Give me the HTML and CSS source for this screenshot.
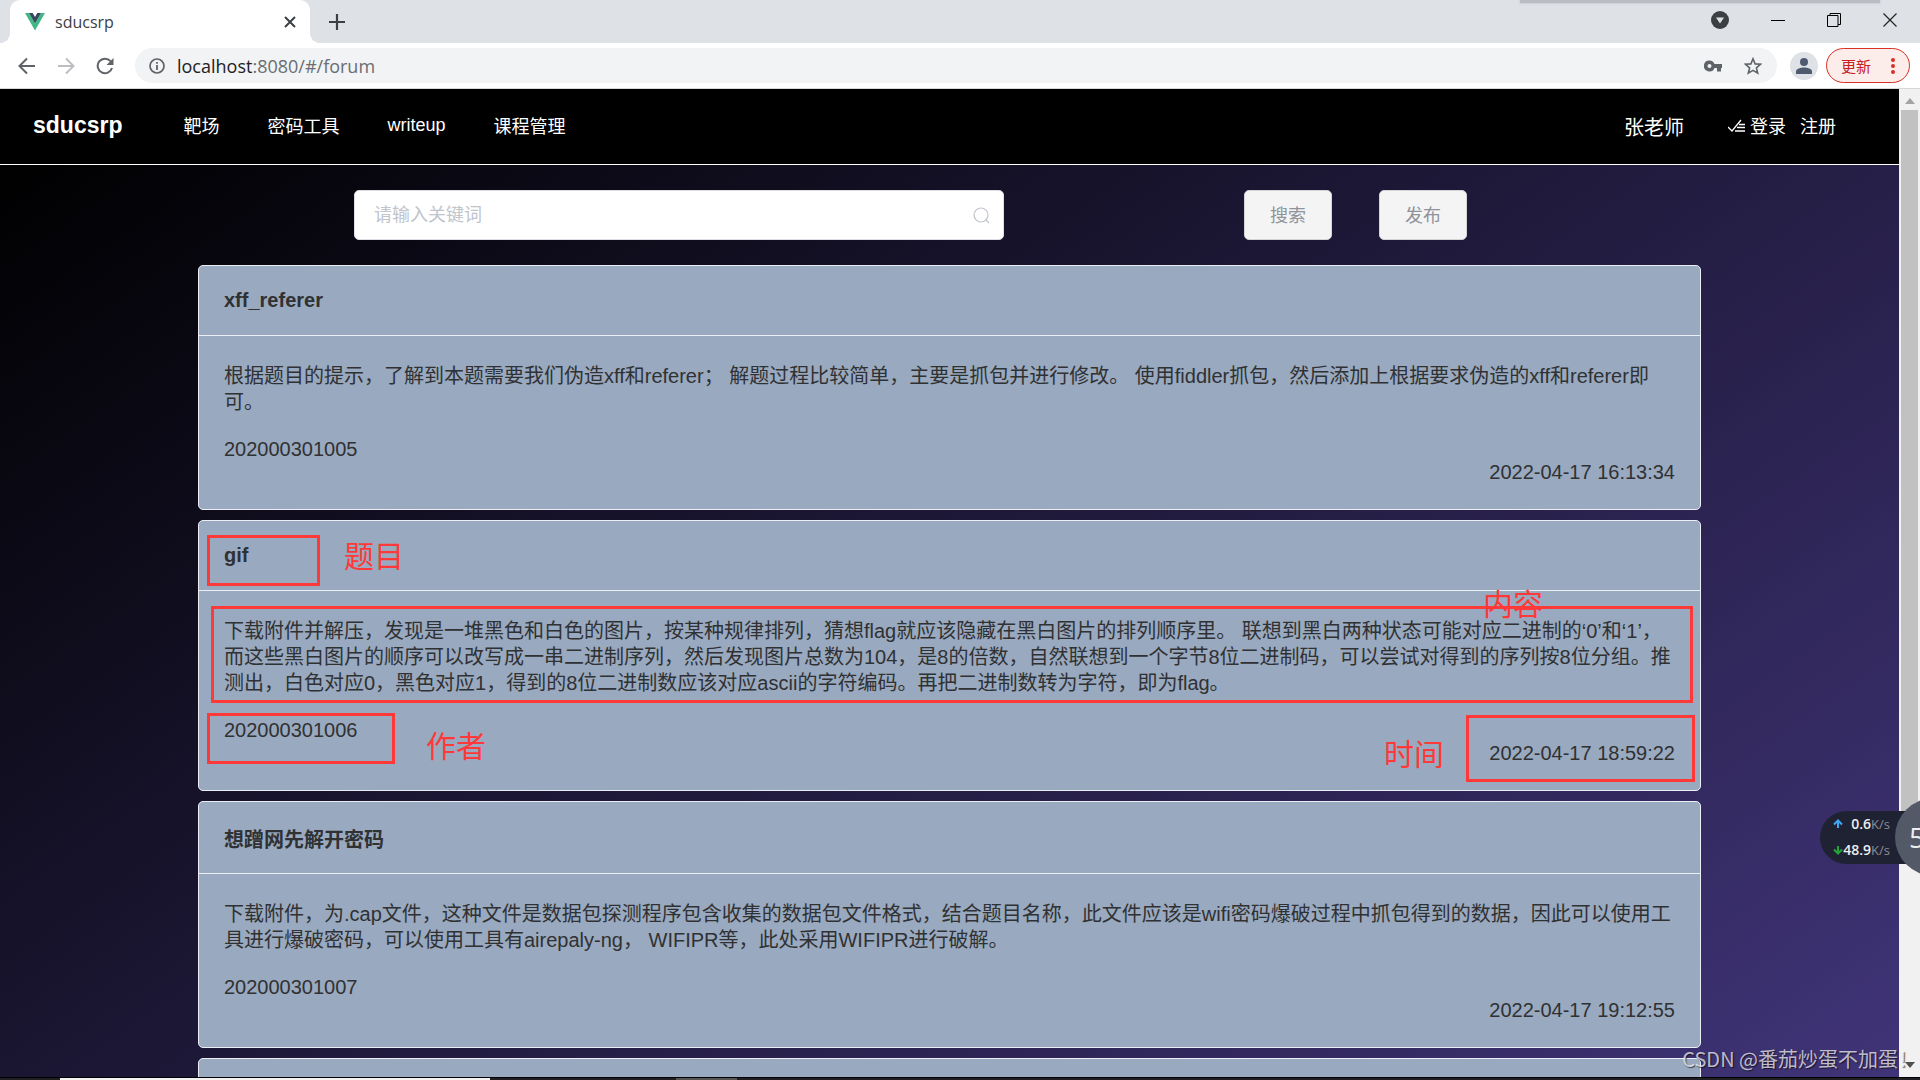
FILE: index.html
```html
<!DOCTYPE html>
<html lang="zh-CN">
<head>
<meta charset="utf-8">
<title>sducsrp</title>
<link rel="stylesheet" href="styles.css">
</head>
<body>
<div class="window">
  <header class="tabstrip">
    <div class="tab">
      <svg class="tab-logo" width="20" height="18" viewBox="0 0 20 18" aria-hidden="true"><path d="M0 0h4l6 10.500L16 0h4L10 17.500z" fill="#41b883"/><path d="M4 0h3.700L10 4l2.300-4H16l-6 10.500z" fill="#35495e"/></svg>
      <span class="tab-title">sducsrp</span>
      <button class="icon-btn" aria-label="关闭标签页"><svg width="12" height="12" viewBox="0 0 12 12"><path d="M1 1l10 10M11 1L1 11" stroke="#3c4043" stroke-width="2"/></svg></button>
    </div>
    <button class="icon-btn new-tab" aria-label="新标签页"><svg width="16" height="16" viewBox="0 0 16 16"><path d="M8 0v16M0 8h16" stroke="#3c4043" stroke-width="2.200"/></svg></button>
    <div class="window-controls">
      <button class="icon-btn" aria-label="搜索标签页"><svg width="18" height="18" viewBox="0 0 18 18"><circle cx="9" cy="9" r="9" fill="#3c4043"/><path d="M5 6.500h8L9 12.500z" fill="#dee1e6"/></svg></button>
      <button class="icon-btn" aria-label="最小化"><svg width="14" height="14" viewBox="0 0 14 14"><path d="M0 7.500h14" stroke="#000"/></svg></button>
      <button class="icon-btn" aria-label="还原"><svg width="14" height="14" viewBox="0 0 14 14"><path d="M.5 2.500h10.500v11H.5zM3 2.500V.5h10.500v11H11" fill="none" stroke="#000"/></svg></button>
      <button class="icon-btn" aria-label="关闭"><svg width="14" height="14" viewBox="0 0 14 14"><path d="M.5.5l13 13M13.500.5l-13 13" stroke="#222" stroke-width="1.200"/></svg></button>
    </div>
  </header>

  <div class="toolbar">
    <button class="icon-btn" aria-label="后退"><svg width="18" height="18" viewBox="0 0 18 18"><path d="M17 9H2M9 1.500L1.500 9 9 16.500" fill="none" stroke="#5f6368" stroke-width="2"/></svg></button>
    <button class="icon-btn" aria-label="前进"><svg width="18" height="18" viewBox="0 0 18 18"><path d="M1 9h15M9 1.500L16.500 9 9 16.500" fill="none" stroke="#bcbec1" stroke-width="2"/></svg></button>
    <button class="icon-btn" aria-label="刷新"><svg width="18" height="18" viewBox="0 0 18 18"><path d="M14.500 4.200A7.300 7.300 0 1 0 16 11" fill="none" stroke="#5f6368" stroke-width="2"/><path d="M17.500 1v7h-7z" fill="#5f6368"/></svg></button>
    <div class="address">
      <svg width="16" height="16" viewBox="0 0 16 16" aria-hidden="true"><circle cx="8" cy="8" r="7" fill="none" stroke="#5f6368" stroke-width="1.700"/><path d="M8 7v5M8 4v1.800" stroke="#5f6368" stroke-width="1.800"/></svg>
      <span class="url">localhost<span class="url-path">:8080/#/forum</span></span>
      <button class="icon-btn" aria-label="密码"><svg width="18" height="12" viewBox="0 0 18 12"><path fill-rule="evenodd" d="M5.500.5a5.500 5.500 0 1 0 5 7.500H13v3.500h4V8h1V4h-7.500a5.500 5.500 0 0 0-5-3.500zm0 3.500a2 2 0 1 1 0 4 2 2 0 0 1 0-4z" fill="#5f6368"/></svg></button>
      <button class="icon-btn" aria-label="收藏"><svg width="18" height="18" viewBox="0 0 18 18"><path d="M9 1.800l2.100 5.100 5.400.4-4.100 3.600 1.300 5.300L9 13.400l-4.700 2.800 1.300-5.300-4.100-3.600 5.400-.4z" fill="none" stroke="#5f6368" stroke-width="1.600"/></svg></button>
    </div>
    <button class="icon-btn profile" aria-label="用户"><svg width="28" height="28" viewBox="0 0 28 28"><circle cx="14" cy="14" r="14" fill="#dee1e6"/><circle cx="14" cy="10" r="4" fill="#4d5a70"/><path d="M6 22v-2.500c0-3 5-4 8-4s8 1 8 4V22z" fill="#4d5a70"/></svg></button>
    <button class="update">更新<svg width="4" height="16" viewBox="0 0 4 16" aria-hidden="true"><g fill="#d93025"><circle cx="2" cy="2" r="2"/><circle cx="2" cy="8" r="2"/><circle cx="2" cy="14" r="2"/></g></svg></button>
  </div>

  <div class="viewport">
    <div class="page">
      <nav class="nav">
        <a class="brand" href="#">sducsrp</a>
        <a href="#">靶场</a>
        <a href="#">密码工具</a>
        <a href="#">writeup</a>
        <a href="#">课程管理</a>
        <span class="user">张老师</span>
        <a class="login" href="#"><svg width="18" height="13" viewBox="0 0 18 13" aria-hidden="true"><path d="M0 8l4 4L13 1M11 5.500h6M9 8.500h8M7 12h10" fill="none" stroke="#fff" stroke-width="1.300"/></svg>登录</a>
        <a class="register" href="#">注册</a>
      </nav>
      <main class="content">
        <form class="search">
          <label class="search-box">
            <input type="text" placeholder="请输入关键词" aria-label="关键词">
            <svg width="17" height="17" viewBox="0 0 17 17" aria-hidden="true"><circle cx="8" cy="8" r="7" fill="none" stroke="#c0c4cc" stroke-width="1.200"/><path d="M12.500 12.500L16 16" stroke="#c0c4cc" stroke-width="1.200"/></svg>
          </label>
          <button class="btn" type="button">搜索</button>
          <button class="btn" type="button">发布</button>
        </form>

        <article class="card">
          <h2>xff_referer</h2>
          <div class="card-body">
            <p>根据题目的提示，了解到本题需要我们伪造xff和referer； 解题过程比较简单，主要是抓包并进行修改。 使用fiddler抓包，然后添加上根据要求伪造的xff和referer即可。</p>
            <div class="author">202000301005</div>
            <time>2022-04-17 16:13:34</time>
          </div>
        </article>

        <article class="card">
          <h2>gif</h2>
          <div class="card-body">
            <p>下载附件并解压，发现是一堆黑色和白色的图片，按某种规律排列，猜想flag就应该隐藏在黑白图片的排列顺序里。 联想到黑白两种状态可能对应二进制的‘0’和‘1’，而这些黑白图片的顺序可以改写成一串二进制序列，然后发现图片总数为104，是8的倍数，自然联想到一个字节8位二进制码，可以尝试对得到的序列按8位分组。推测出，白色对应0，黑色对应1，得到的8位二进制数应该对应ascii的字符编码。再把二进制数转为字符，即为flag。</p>
            <div class="author">202000301006</div>
            <time>2022-04-17 18:59:22</time>
          </div>
          <span class="mark mark-title"></span><span class="note note-title">题目</span>
          <span class="mark mark-text"></span><span class="note note-text">内容</span>
          <span class="mark mark-author"></span><span class="note note-author">作者</span>
          <span class="mark mark-time"></span><span class="note note-time">时间</span>
        </article>

        <article class="card">
          <h2 class="title-cjk">想蹭网先解开密码</h2>
          <div class="card-body">
            <p>下载附件，为.cap文件，这种文件是数据包探测程序包含收集的数据包文件格式，结合题目名称，此文件应该是wifi密码爆破过程中抓包得到的数据，因此可以使用工具进行爆破密码，可以使用工具有airepaly-ng， WIFIPR等，此处采用WIFIPR进行破解。</p>
            <div class="author">202000301007</div>
            <time>2022-04-17 19:12:55</time>
          </div>
        </article>

        <article class="card card-next"></article>
      </main>
    </div>
    <div class="scrollbar">
      <svg width="10" height="6" viewBox="0 0 10 6" aria-hidden="true"><path d="M0 6l5-6 5 6z" fill="#a3a3a3"/></svg>
      <div class="thumb"></div>
      <svg width="10" height="6" viewBox="0 0 10 6" aria-hidden="true"><path d="M0 0l5 6 5-6z" fill="#505050"/></svg>
    </div>
  </div>
  <footer class="taskbar"><span class="task-search"></span><span class="task-active"></span></footer>

  <div class="dock-edge"></div>
  <div class="netspeed">
    <div class="rates">
      <div class="rate"><svg width="10" height="10" viewBox="0 0 10 10" aria-hidden="true"><path d="M5 9V2M1 5.500l4-4 4 4" fill="none" stroke="#3fa9f5" stroke-width="2"/></svg><b>0.6</b><span>K/s</span></div>
      <div class="rate"><svg width="10" height="10" viewBox="0 0 10 10" aria-hidden="true"><path d="M5 1v7M1 4.500l4 4 4-4" fill="none" stroke="#22a637" stroke-width="2"/></svg><b>48.9</b><span>K/s</span></div>
    </div>
    <div class="ball">5</div>
  </div>
  <div class="watermark">CSDN @番茄炒蛋不加蛋！</div>
</div>
</body>
</html>
```
FILE: styles.css
```css
* { box-sizing: border-box; }
body {
  margin: 0;
  font-family: "Liberation Sans", "Noto Sans CJK SC", sans-serif;
  color: #303133;
}
a { color: inherit; text-decoration: none; }
button, input { font: inherit; }
svg { display: block; flex: none; }

.window {
  position: relative;
  display: flex;
  flex-direction: column;
  height: 100vh;
  overflow: hidden;
}

.icon-btn { padding: 0; border: 0; background: none; }

/* Browser chrome */
.tabstrip {
  display: flex;
  align-items: center;
  flex: none;
  height: 43px;
  padding: 0 23px 0 10px;
  background: #dee1e6;
  font-family: "Open Sans", "Noto Sans CJK SC", sans-serif;
}
.tab {
  position: relative;
  display: flex;
  align-items: center;
  gap: 10px;
  width: 300px;
  height: 43px;
  padding: 0 14px 0 15px;
  border-radius: 10px 10px 0 0;
  background: #fff;
  font-size: 16px;
  color: #3c4043;
}
.tab::before, .tab::after {
  content: "";
  position: absolute;
  bottom: 0;
  width: 10px;
  height: 10px;
}
.tab::before { left: -10px; background: radial-gradient(circle at 0 0, #dee1e6 10px, #fff 10px); }
.tab::after { right: -10px; background: radial-gradient(circle at 100% 0, #dee1e6 10px, #fff 10px); }
.tab-title { flex: 1; }
.new-tab { margin-left: 19px; }
.window-controls {
  display: flex;
  align-items: center;
  gap: 42px;
  margin-left: auto;
  padding-bottom: 4px;
}
.toolbar {
  display: flex;
  align-items: center;
  gap: 21px;
  flex: none;
  height: 46px;
  padding: 0 10px 0 18px;
  border-bottom: 1px solid #d5d7da;
  background: #fff;
  font-family: "Open Sans", "Noto Sans CJK SC", sans-serif;
}
.address {
  display: flex;
  align-items: center;
  gap: 22px;
  flex: 1;
  height: 35px;
  padding: 0 15px 0 14px;
  border-radius: 18px;
  background: #f1f3f4;
}
.url { flex: 1; margin-left: -10px; font-size: 18px; color: #202124; }
.url-path { color: #6a6d71; }
.profile { margin-left: -8px; }
.update {
  display: flex;
  align-items: center;
  justify-content: space-between;
  width: 84px;
  height: 35px;
  margin-left: -13px;
  padding: 0 14px;
  border: 1px solid #d93025;
  border-radius: 18px;
  background: #fcecea;
  font-size: 15px;
  color: #c5221f;
}

/* Forum page */
.viewport { display: flex; flex: 1; min-height: 0; }
.page {
  flex: 1;
  overflow: hidden;
  background: linear-gradient(145deg, #000 3%, #403478);
}
.nav {
  display: flex;
  align-items: center;
  gap: 48px;
  height: 76px;
  padding: 0 63px 3px 33px;
  border-bottom: 1px solid #fff;
  background: #000;
  color: #fff;
  font-size: 18px;
}
.brand { margin-right: 13px; font-size: 23px; font-weight: bold; }
.user { margin-left: auto; padding-top: 2px; font-size: 20px; }
.login { display: flex; align-items: center; gap: 4px; margin-left: -4px; }
.register { margin-left: -34px; }

.content {
  display: flex;
  flex-direction: column;
  gap: 10px;
  padding: 25px 198px 0 198px;
}
.search {
  display: flex;
  gap: 47px;
  margin-bottom: 15px;
  padding: 0 234px 0 156px;
}
.search-box {
  display: flex;
  align-items: center;
  flex: 1;
  height: 50px;
  margin-right: 193px;
  padding: 0 13px 0 19px;
  border: 1px solid #dcdfe6;
  border-radius: 5px;
  background: #fff;
}
.search-box input {
  flex: 1;
  min-width: 0;
  padding: 0;
  border: 0;
  outline: 0;
  background: none;
  font-size: 18px;
}
.search-box input::placeholder { color: #c0c4cc; }
.btn {
  width: 88px;
  height: 50px;
  padding: 0 0 2px;
  border: 1px solid #d3d4d6;
  border-radius: 5px;
  background: #f4f4f5;
  color: #909399;
  font-size: 18px;
}

.card {
  position: relative;
  flex: none;
  border: 1px solid #ebeef5;
  border-radius: 5px;
  background: #99a9bf;
  font-size: 20px;
  line-height: 23px;
}
.card h2 {
  margin: 0;
  padding: 23px 25px;
  border-bottom: 1px solid #ebeef5;
  font-size: 20px;
}
.card .title-cjk { padding: 25px 25px 20px; line-height: 26px; }
.card-body { padding: 27px 25px 25px; }
.card p { margin: 0 0 23px; line-height: 26px; }
.card time { display: block; text-align: right; }
.card-next { height: 245px; }

/* Review marks laid over the card */
.mark { position: absolute; border: 3px solid #ff3838; }
.mark-title { left: 8px; top: 14px; width: 113px; height: 51px; }
.mark-text { left: 12px; right: 7px; top: 85px; height: 97px; }
.mark-author { left: 8px; top: 192px; width: 188px; height: 51px; }
.mark-time { right: 5px; top: 194px; width: 229px; height: 67px; }
.note { position: absolute; font-size: 30px; line-height: 40px; color: #ff3838; }
.note-title { left: 145px; top: 16px; }
.note-text { right: 157px; top: 64px; }
.note-author { left: 227px; top: 206px; }
.note-time { right: 256px; top: 214px; }

.scrollbar {
  display: flex;
  flex-direction: column;
  align-items: center;
  flex: none;
  width: 21px;
  padding: 9px 0;
  background: #f1f1f1;
}
.thumb { width: 17px; height: 73%; margin: 6px 0 auto; background: #c1c1c1; }

.taskbar {
  display: flex;
  flex: none;
  height: 3px;
  padding-left: 60px;
  border-top: 1px solid #000;
  background: #202024;
}
.task-search { width: 430px; background: #f3f3f3; }
.task-active { width: 61px; margin-left: 186px; background: #555; }

/* Floating desktop widgets */
.dock-edge {
  position: absolute;
  top: 0;
  right: 40px;
  width: 360px;
  height: 3px;
  background: #b9bcc1;
  box-shadow: 0 0 3px #b9bcc1;
}
.netspeed {
  position: absolute;
  right: 0;
  top: 798px;
  display: flex;
  align-items: center;
  width: 100px;
  height: 78px;
  overflow: hidden;
}
.rates {
  flex: none;
  width: 100px;
  height: 53px;
  padding: 0 0 0 13px;
  border-radius: 27px 0 0 27px;
  background: #1f2233;
  font-family: "Open Sans", sans-serif;
}
.rate { display: flex; align-items: center; height: 26px; color: #eee; font-size: 14px; }
.rate b { width: 28px; text-align: right; font-weight: 600; }
.rate span { font-size: 13px; color: #8b8d98; }
.ball {
  flex: none;
  width: 78px;
  height: 78px;
  margin-left: -25px;
  padding-left: 14px;
  border-radius: 50%;
  background: #545968;
  color: #eee;
  font: 28px/78px "Open Sans", sans-serif;
}
.watermark {
  position: absolute;
  right: 2px;
  bottom: 6px;
  font-family: "Noto Sans CJK SC", sans-serif;
  font-size: 20px;
  line-height: 30px;
  color: rgba(255, 255, 255, .7);
  text-shadow: 1px 1px 1px rgba(0, 0, 0, .6);
}
```
